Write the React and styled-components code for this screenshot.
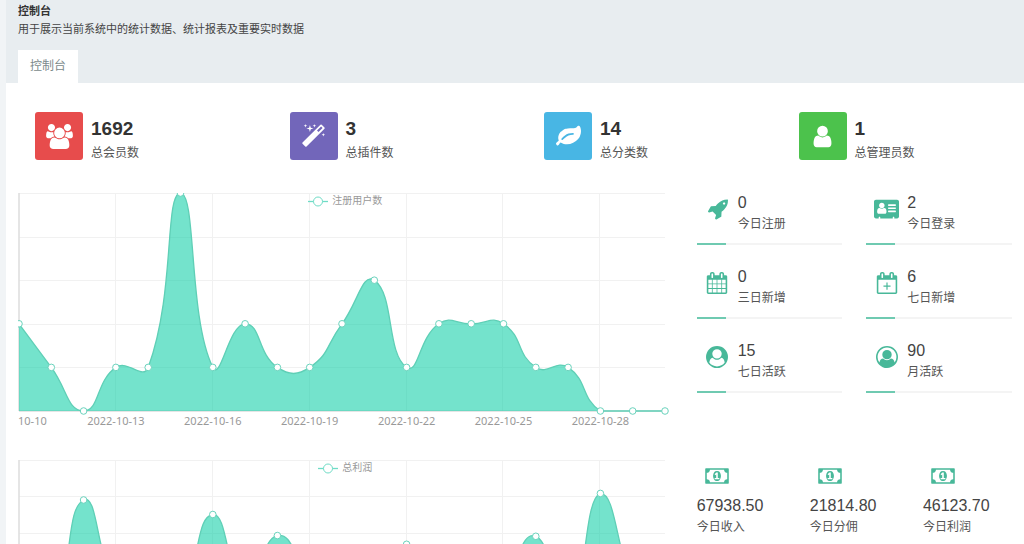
import React, { useLayoutEffect, useRef, useState } from "react";
import styled, { createGlobalStyle } from "styled-components";

const GlobalStyle = createGlobalStyle`
  * {
    box-sizing: border-box;
  }
  body {
    margin: 0;
    overflow: hidden;
    background-color: #f1f4f6;
    color: #444;
    font-family: "Liberation Sans", "Noto Sans CJK SC", sans-serif;
    font-size: 12px;
  }
`;
const StPage = styled.div`
  margin-left: 6px;
  min-height: 100vh;
  background-color: #fff;
`;
const StHeader = styled.header`
  background-color: #e8edf0;
  padding: 2px 12px 0;
`;
const StTitle = styled.h1`
  margin: 0;
  font-size: 11px;
  line-height: 18px;
  font-weight: 700;
  color: #333;
`;
const StDescription = styled.p`
  margin: 0 0 12px;
  font-size: 11px;
  line-height: 18px;
`;
const StTabs = styled.nav`
  display: flex;
`;
const StTab = styled.a`
  padding: 0 12px;
  line-height: 33px;
  color: #7b8a8b;
  background-color: #fff;
  text-decoration: none;
`;
const StSummary = styled.section`
  display: grid;
  grid-template-columns: repeat(4, 1fr);
  padding: 29px 0;
`;
const StSummaryItem = styled.div`
  display: flex;
  gap: 8px;
  padding-left: 29px;
`;
const StSummaryIcon = styled.div`
  display: flex;
  align-items: center;
  justify-content: center;
  width: 48px;
  height: 48px;
  border-radius: 3px;
  color: #fff;
  background-color: ${({ $color }) => $color};
`;
const StSummaryValue = styled.div`
  padding-top: 4px;
  font-size: 19px;
  line-height: 26px;
  font-weight: 700;
  color: #333;
`;
const StLabel = styled.div`
  line-height: 22px;
  color: #555;
`;
const StRow = styled.section`
  display: grid;
  grid-template-columns: 2fr 1fr;
  margin-bottom: 17px;
`;
const StColumn = styled.div`
  min-width: 0;
  padding: 0 12px;
`;
const StTiles = styled.div`
  display: grid;
  grid-template-columns: repeat(2, 1fr);
  gap: 22px 24px;
`;
const StTileBody = styled.div`
  display: flex;
  margin-bottom: 8px;
`;
const StTileIcon = styled.div`
  display: flex;
  justify-content: center;
  width: 41px;
  padding-top: 5px;
  color: #48b899;
`;
const StValue = styled.div`
  font-size: 16px;
  line-height: 20px;
`;
const StBar = styled.div`
  height: 2px;
  background-color: #f4f4f4;
`;
const StBarFill = styled.div`
  width: 20%;
  height: 2px;
  background-color: #6fcab1;
`;
const StMoneyList = styled.div`
  display: grid;
  grid-template-columns: repeat(3, 1fr);
  gap: 24px;
`;
const StMoneyIcon = styled.div`
  display: flex;
  align-items: center;
  width: 41px;
  height: 36px;
  justify-content: center;
  padding-bottom: 4px;
  color: #48b899;
`;
const StChart = styled.div`
  position: relative;
  height: 250px;
`;
const StLegend = styled.div`
  position: absolute;
  top: 0;
  left: 0;
  right: 0;
  display: flex;
  align-items: center;
  justify-content: center;
  gap: 4px;
  font-size: 10px;
  line-height: 16px;
  color: #999;
`;
const StCanvas = styled.svg`
  display: block;
  width: 100%;
  height: 250px;
  overflow: hidden;
`;
const StAxisText = styled.text`
  font-family: "Noto Sans", "Noto Sans CJK SC", sans-serif;
  font-size: 11px;
  fill: #999;
  text-anchor: ${({ $start }) => ($start ? "start" : "middle")};
`;

const icons = {
  users: {
    width: 1920,
    d: "M593 896q-162 5-265 128h-134q-82 0-138-40.5t-56-118.5q0-353 124-353 6 0 43.5 21t97.5 42.5 119 21.5q67 0 133-23-5 37-5 66 0 139 81 256zm1071 637q0 120-73 189.5t-194 69.5h-874q-121 0-194-69.5t-73-189.5q0-53 3.5-103.5t14-109 26.5-108.5 43-97.5 62-81 85.5-53.5 111.5-20q10 0 43 21.5t73 48 107 48 135 21.5 135-21.5 107-48 73-48 43-21.5q61 0 111.5 20t85.5 53.5 62 81 43 97.5 26.5 108.5 14 109 3.5 103.5zm-1024-1277q0 106-75 181t-181 75-181-75-75-181 75-181 181-75 181 75 75 181zm704 384q0 159-112.5 271.5t-271.5 112.5-271.5-112.5-112.5-271.5 112.5-271.5 271.5-112.5 271.5 112.5 112.5 271.5zm576 225q0 78-56 118.5t-138 40.5h-134q-103-123-265-128 81-117 81-256 0-29-5-66 66 23 133 23 59 0 119-21.5t97.5-42.5 43.5-21q124 0 124 353zm-128-609q0 106-75 181t-181 75-181-75-75-181 75-181 181-75 181 75 75 181z",
  },
  magic: {
    width: 1792,
    d: "M1254 581l293-293-107-107-293 293zm447-293q0 27-18 45l-1286 1286q-18 18-45 18t-45-18l-198-198q-18-18-18-45t18-45l1286-1286q18-18 45-18t45 18l198 198q18 18 18 45zm-1351-190l98 30-98 30-30 98-30-98-98-30 98-30 30-98zm350 162l196 60-196 60-60 196-60-196-196-60 196-60 60-196zm930 478l98 30-98 30-30 98-30-98-98-30 98-30 30-98zm-640-640l98 30-98 30-30 98-30-98-98-30 98-30 30-98z",
  },
  leaf: {
    width: 1792,
    d: "M1280 704q0-26-19-45t-45-19q-172 0-318 49.5t-259.5 134-235.5 219.5q-19 21-19 45 0 26 19 45t45 19q24 0 45-19 27-24 74-71t67-66q137-124 268.5-176t313.5-52q26 0 45-19t19-45zm512-198q0 95-20 193-46 224-184.5 383t-357.5 268q-214 108-438 108-148 0-286-47-15-5-88-42t-96-37q-16 0-39.5 32t-45 70-52.5 70-60 32q-43 0-63.5-17.5t-45.5-59.5q-2-4-6-11t-5.5-10-3-9.5-1.5-13.5q0-35 31-73.5t68-65.5 68-56 31-48q0-4-14-38t-16-44q-9-51-9-104 0-115 43.5-220t119-184.5 170.5-139 204-95.5q55-18 145-25.5t179.5-9 178.5-6 163.5-24 113.5-56.5l29.5-29.5 29.5-28 27-20 36.5-16 43.5-4.5q39 0 70.5 46t47.5 112 24 124 8 96z",
  },
  user: {
    width: 1792,
    d: "M1536 1399q0 109-62.5 187t-150.5 78h-854q-88 0-150.5-78t-62.5-187q0-85 8.5-160.5t31.5-152 58.5-131 94-89 134.5-34.5q131 128 313 128t313-128q76 0 134.5 34.5t94 89 58.5 131 31.5 152 8.5 160.5zm-256-887q0 159-112.5 271.5t-271.5 112.5-271.5-112.5-112.5-271.5 112.5-271.5 271.5-112.5 271.5 112.5 112.5 271.5z",
  },
  rocket: {
    width: 1792,
    d: "M1568 448q0-40-28-68t-68-28-68 28-28 68 28 68 68 28 68-28 28-68zm224-288q0 249-75.5 430.5t-253.5 360.5q-81 80-195 176l-20 379q-2 16-16 26l-384 224q-7 4-16 4-12 0-23-9l-64-64q-13-14-8-32l85-276-281-281-276 85q-3 1-9 1-14 0-23-9l-64-64q-17-19-5-39l224-384q10-14 26-16l379-20q96-114 176-195 188-187 358-258t431-71q14 0 24 9.5t10 22.5z",
  },
  card: {
    width: 2048,
    d: "M1024 1131q0-64-9-117.5t-29.5-103-60.5-78-97-28.5q-6 4-30 18t-37.5 21.5-35.5 17.5-43 14.5-42 4.5-42-4.5-43-14.5-35.5-17.5-37.5-21.5-30-18q-57 0-97 28.5t-60.5 78-29.5 103-9 117.5 37 106.5 91 42.5h512q54 0 91-42.5t37-106.5zm-157-520q0-94-66.5-160.5t-160.5-66.5-160.5 66.5-66.5 160.5 66.5 160.5 160.5 66.5 160.5-66.5 66.5-160.5zM1184 512h576q32 0 32 32v64q0 32-32 32h-576q-32 0-32-32v-64q0-32 32-32zM1184 768h576q32 0 32 32v64q0 32-32 32h-576q-32 0-32-32v-64q0-32 32-32zM1184 1024h576q32 0 32 32v64q0 32-32 32h-576q-32 0-32-32v-64q0-32 32-32zM160 128h1728q66 0 113 47t47 113v1216q0 66-47 113t-113 47h-224v-96q0-32-32-32h-64q-32 0-32 32v96h-1024v-96q0-32-32-32h-64q-32 0-32 32v96h-224q-66 0-113-47t-47-113v-1216q0-66 47-113t113-47z",
  },
  calendar: {
    width: 1792,
    d: "M192 1664h288v-288h-288v288zm352 0h320v-288h-320v288zm-352-352h288v-320h-288v320zm352 0h320v-320h-320v320zm-352-384h288v-288h-288v288zm736 736h320v-288h-320v288zm-384-736h320v-288h-320v288zm768 736h288v-288h-288v288zm-384-352h320v-320h-320v320zm-352-864v-288q0-13-9.5-22.5t-22.5-9.5h-64q-13 0-22.5 9.5t-9.5 22.5v288q0 13 9.5 22.5t22.5 9.5h64q13 0 22.5-9.5t9.5-22.5zm736 864h288v-320h-288v320zm-384-384h320v-288h-320v288zm384 0h288v-288h-288v288zm32-480v-288q0-13-9.5-22.5t-22.5-9.5h-64q-13 0-22.5 9.5t-9.5 22.5v288q0 13 9.5 22.5t22.5 9.5h64q13 0 22.5-9.5t9.5-22.5zm384-64v1280q0 52-38 90t-90 38h-1408q-52 0-90-38t-38-90v-1280q0-52 38-90t90-38h128v-96q0-66 47-113t113-47h64q66 0 113 47t47 113v96h384v-96q0-66 47-113t113-47h64q66 0 113 47t47 113v96h128q52 0 90 38t38 90z",
  },
  calendarPlus: {
    width: 1792,
    d: "M192 640v1024h1408v-1024zM848 864h96v240h240v96h-240v240h-96v-240h-240v-96h240zM576 448v-288q0-13-9.500-22.500t-22.500-9.500h-64q-13 0-22.500 9.500t-9.500 22.500v288q0 13 9.500 22.500t22.500 9.500h64q13 0 22.500-9.500t9.500-22.500zM1344 448v-288q0-13-9.500-22.500t-22.500-9.500h-64q-13 0-22.500 9.500t-9.500 22.500v288q0 13 9.500 22.500t22.500 9.500h64q13 0 22.500-9.500t9.500-22.500zM1728 384v1280q0 52-38 90t-90 38h-1408q-52 0-90-38t-38-90v-1280q0-52 38-90t90-38h128v-96q0-66 47-113t113-47h64q66 0 113 47t47 113v96h384v-96q0-66 47-113t113-47h64q66 0 113 47t47 113v96h128q52 0 90 38t38 90z",
  },
  userCircle: {
    width: 1792,
    d: "M1523 1339q-22-155-87.500-257.500t-184.500-118.500q-67 74-159.500 115.500t-195.500 41.500-195.500-41.500-159.500-115.500q-119 16-184.500 118.500t-87.500 257.500q106 150 271 237.500t356 87.500 356-87.500 271-237.500zm-243-699q0-159-112.500-271.500t-271.500-112.500-271.500 112.500-112.500 271.500 112.500 271.500 271.500 112.500 271.500-112.500 112.500-271.500zm512 256q0 182-71 347.500t-190.500 286-285.500 191.500-349 71q-182 0-348-71t-286-191-191-286-71-348 71-348 191-286 286-191 348-71 348 71 286 191 191 286 71 348z",
  },
  userCircleO: {
    width: 1792,
    d: "M896 0q182 0 348 71t286 191 191 286 71 348q0 181-70.500 347t-190.500 286-286 191.500-349 71.500-349-71-285.500-191.500-190.500-286-71-347.500 71-348 191-286 286-191 348-71zm619 1351q149-205 149-455 0-156-61-298t-164-245-245-164-298-61-298 61-245 164-164 245-61 298q0 250 149 455 66-327 306-327 131 128 313 128t313-128q240 0 306 327zm-235-647q0-159-112.500-271.500t-271.500-112.500-271.500 112.500-112.500 271.500 112.500 271.500 271.500 112.500 271.500-112.500 112.500-271.500z",
  },
  money: {
    width: 1920,
    d: "M768 1152h384v-96h-128v-448h-114l-148 137 77 80q42-37 55-57h2v288h-128v96zm512-256q0 70-21 142t-59.500 134-101.500 101-138 39-138-39-101.500-101-59.500-134-21-142 21-142 59.500-134 101.500-101 138-39 138 39 101.500 101 59.500 134 21 142zm512 256v-512q-106 0-181-75t-75-181h-1152q0 106-75 181t-181 75v512q106 0 181 75t75 181h1152q0-106 75-181t181-75zm128-832v1152q0 26-19 45t-45 19h-1792q-26 0-45-19t-19-45v-1152q0-26 19-45t45-19h1792q26 0 45 19t19 45z",
  },
};

const summary = [
  { icon: "users", color: "#e74c4c", value: "1692", label: "总会员数" },
  { icon: "magic", color: "#7266ba", value: "3", label: "总插件数" },
  { icon: "leaf", color: "#48b6e4", value: "14", label: "总分类数" },
  { icon: "user", color: "#4cc24c", value: "1", label: "总管理员数" },
];
const tiles = [
  { icon: "rocket", value: "0", label: "今日注册" },
  { icon: "card", value: "2", label: "今日登录" },
  { icon: "calendar", value: "0", label: "三日新增" },
  { icon: "calendarPlus", value: "6", label: "七日新增" },
  { icon: "userCircle", value: "15", label: "七日活跃" },
  { icon: "userCircleO", value: "90", label: "月活跃" },
];
const money = [
  { value: "67938.50", label: "今日收入" },
  { value: "21814.80", label: "今日分佣" },
  { value: "46123.70", label: "今日利润" },
];
const registered = [
  2, 1, 0, 1, 1, 5, 1, 2, 1, 1, 2, 3, 1, 2, 2, 2, 1, 1, 0, 0, 0,
];
const profit = [
  0.4, 1.5, 4.9, 2.4, 1.2, 2.2, 4.5, 2.5, 3.92, 2.8, 1.8, 2, 3.68, 2, 1.2,
  2.6, 3.9, 1.9, 5.08, 2.5, 0.4,
];

const Icon = ({ name, size }) => {
  const { width, d } = icons[name];
  return (
    <svg
      width={Math.round((width / 1792) * size)}
      height={size}
      viewBox={`0 0 ${width} 1792`}
      fill="currentColor"
      aria-hidden="true"
    >
      <path fillRule="evenodd" d={d} />
    </svg>
  );
};

const PLOT_HEIGHT = 218;

// smoothed line, control points are kept between the lowest and highest point
const smoothPath = (points) => {
  const ys = points.map((p) => p.y);
  const min = Math.min(...ys);
  const max = Math.max(...ys);
  const clamp = (y) => Math.min(max, Math.max(min, y));
  let d = `M${points[0].x} ${points[0].y}`;
  let out = points[0];
  for (let i = 1; i < points.length; i++) {
    const p = points[i];
    const prev = points[i - 1];
    const next = points[i + 1];
    let into = p;
    let nextOut = p;
    if (next) {
      const vx = next.x - prev.x;
      const vy = next.y - prev.y;
      const a = Math.hypot(p.x - prev.x, p.y - prev.y);
      const b = Math.hypot(next.x - p.x, next.y - p.y);
      const ratio = b / (a + b);
      into = {
        x: p.x - vx * 0.5 * (1 - ratio),
        y: clamp(p.y - vy * 0.5 * (1 - ratio)),
      };
      nextOut = { x: p.x + vx * 0.5 * ratio, y: clamp(p.y + vy * 0.5 * ratio) };
    }
    d += `C${out.x} ${out.y} ${into.x} ${into.y} ${p.x} ${p.y}`;
    out = nextOut;
  }
  return d;
};

const AreaChart = ({ name, data, max }) => {
  const chartRef = useRef();
  const [width, setWidth] = useState(655);

  useLayoutEffect(() => {
    const resize = () => setWidth(chartRef.current.clientWidth);
    resize();
    window.addEventListener("resize", resize);
    return () => window.removeEventListener("resize", resize);
  }, []);

  const right = width - 8;
  const step = (right - 1) / (data.length - 1);
  const points = data.map((value, i) => ({
    x: 1 + i * step,
    y: PLOT_HEIGHT - (value / max) * PLOT_HEIGHT,
  }));
  const line = smoothPath(points);
  const ticks = points
    .map((p, i) => ({ x: p.x, label: i ? `2022-10-${10 + i}` : "10-10" }))
    .filter((tick, i) => i % 3 === 0 && i < 20);

  return (
    <StChart ref={chartRef}>
      <StCanvas role="img" aria-label={name}>
        {Array.from({ length: max }, (_, i) => {
          const y = Math.round((i * PLOT_HEIGHT) / max) + 0.5;
          return <path key={i} d={`M1 ${y}H${right}`} stroke="#f1f1f1" />;
        })}
        {ticks.slice(1).map(({ x, label }) => (
          <path
            key={label}
            d={`M${Math.round(x) - 0.5} 0V${PLOT_HEIGHT}`}
            stroke="#f1f1f1"
          />
        ))}
        <path d={`M1 0V${PLOT_HEIGHT}`} stroke="#ddd" strokeWidth="1.5" />
        <path d={`M1 ${PLOT_HEIGHT}H${right}`} stroke="#ccc" />
        <path
          d={`${line}L${right} ${PLOT_HEIGHT}L1 ${PLOT_HEIGHT}Z`}
          fill="#18d1aa"
          fillOpacity="0.6"
        />
        <path d={line} fill="none" stroke="#5fcfb6" strokeWidth="1.3" />
        {points.map((p, i) => (
          <circle
            key={i}
            cx={p.x}
            cy={p.y}
            r="3.3"
            fill="#fff"
            stroke="#6bd3bd"
          />
        ))}
        {ticks.map(({ x, label }, i) => (
          <StAxisText
            key={label}
            $start={i === 0}
            x={i === 0 ? 0 : x}
            y={PLOT_HEIGHT + 14}
          >
            {label}
          </StAxisText>
        ))}
      </StCanvas>
      <StLegend>
        <svg width="20" height="12" aria-hidden="true">
          <path d="M0 6.500H20" stroke="#6fdcc6" strokeWidth="1.3" />
          <circle cx="10" cy="6.500" r="4.500" fill="#fff" stroke="#6fdcc6" />
        </svg>
        {name}
      </StLegend>
    </StChart>
  );
};

const App = () => {
  return (
    <>
      <GlobalStyle />
      <StPage>
        <StHeader>
          <StTitle>控制台</StTitle>
          <StDescription>
            用于展示当前系统中的统计数据、统计报表及重要实时数据
          </StDescription>
          <StTabs>
            <StTab href="#dashboard">控制台</StTab>
          </StTabs>
        </StHeader>

        <StSummary>
          {summary.map((item) => (
            <StSummaryItem key={item.label}>
              <StSummaryIcon $color={item.color}>
                <Icon name={item.icon} size={25} />
              </StSummaryIcon>
              <div>
                <StSummaryValue>{item.value}</StSummaryValue>
                <StLabel>{item.label}</StLabel>
              </div>
            </StSummaryItem>
          ))}
        </StSummary>

        <StRow>
          <StColumn>
            <AreaChart name="注册用户数" data={registered} max={5} />
          </StColumn>
          <StColumn>
            <StTiles>
              {tiles.map((tile) => (
                <div key={tile.label}>
                  <StTileBody>
                    <StTileIcon>
                      <Icon name={tile.icon} size={22} />
                    </StTileIcon>
                    <div>
                      <StValue>{tile.value}</StValue>
                      <StLabel>{tile.label}</StLabel>
                    </div>
                  </StTileBody>
                  <StBar>
                    <StBarFill />
                  </StBar>
                </div>
              ))}
            </StTiles>
          </StColumn>
        </StRow>

        <StRow>
          <StColumn>
            <AreaChart name="总利润" data={profit} max={6} />
          </StColumn>
          <StColumn>
            <StMoneyList>
              {money.map((item) => (
                <div key={item.label}>
                  <StMoneyIcon>
                    <Icon name="money" size={22} />
                  </StMoneyIcon>
                  <StValue>{item.value}</StValue>
                  <StLabel>{item.label}</StLabel>
                </div>
              ))}
            </StMoneyList>
          </StColumn>
        </StRow>
      </StPage>
    </>
  );
};

export default App;
